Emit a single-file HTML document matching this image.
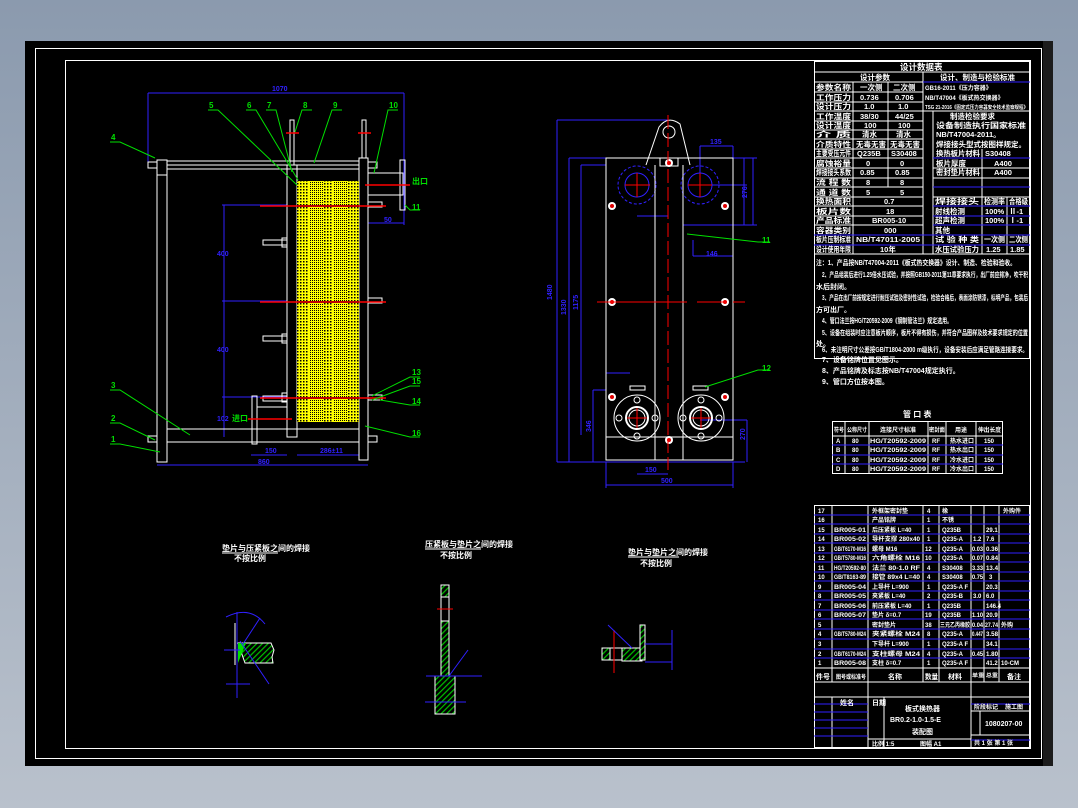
<!DOCTYPE html>
<html><head><meta charset="utf-8"><style>
html,body{margin:0;padding:0;width:1078px;height:808px;overflow:hidden;background:linear-gradient(#8b9aae,#b9c1cc);}
svg{position:absolute;left:0;top:0}
text{font-family:"Liberation Sans","Noto Sans CJK SC",sans-serif;font-weight:bold}
</style></head><body>
<svg width="1078" height="808" viewBox="0 0 1078 808" xmlns="http://www.w3.org/2000/svg">
<defs>
<pattern id="dots" width="3" height="3" patternUnits="userSpaceOnUse"><rect width="3" height="3" fill="#ffff00"/><rect x="0" y="0" width="1.5" height="1.5" fill="#000"/></pattern>
<pattern id="dots2" width="2" height="2" patternUnits="userSpaceOnUse"><rect width="2" height="2" fill="#ffff00"/><rect width="1" height="1" fill="#000"/></pattern>
<pattern id="hatch" width="4" height="4" patternUnits="userSpaceOnUse" patternTransform="rotate(45)"><rect width="4" height="4" fill="#000"/><rect width="1.2" height="4" fill="#00c000"/></pattern>
</defs>
<rect x="25" y="41" width="1028" height="725" fill="#000"/>
<rect x="1043" y="41" width="10" height="725" fill="#1c1c1c"/>
<rect x="35.5" y="48.5" width="1006" height="710" fill="none" stroke="#fff" stroke-width="1"/>
<rect x="65.5" y="60.5" width="965" height="688" fill="none" stroke="#fff" stroke-width="1"/>

<!-- LEFT VIEW -->
<g fill="none" stroke="#fff" stroke-width="1">
<line x1="148" y1="93" x2="404" y2="93" stroke="#3020ff"/>
<line x1="148" y1="93" x2="148" y2="165" stroke="#3020ff"/>
<line x1="404" y1="93" x2="404" y2="225" stroke="#3020ff"/>
<line x1="157" y1="465" x2="368" y2="465" stroke="#3020ff"/>
<line x1="224" y1="205" x2="224" y2="437" stroke="#3020ff"/>
<line x1="222" y1="205" x2="287" y2="205" stroke="#3020ff"/>
<line x1="222" y1="301" x2="287" y2="301" stroke="#3020ff"/>
<line x1="222" y1="397" x2="287" y2="397" stroke="#3020ff"/>
<line x1="251" y1="455" x2="287" y2="455" stroke="#3020ff"/>
<line x1="297" y1="455" x2="359" y2="455" stroke="#3020ff"/>
<line x1="368" y1="223" x2="404" y2="223" stroke="#3020ff"/>
<rect x="157" y="160" width="10" height="302"/>
<line x1="157" y1="175" x2="167" y2="175"/>
<rect x="167" y="161" width="192" height="4"/>
<rect x="167" y="165" width="192" height="4"/>
<rect x="359" y="158" width="9" height="302"/>
<rect x="287" y="165" width="10" height="272"/>
<rect x="290" y="120" width="4" height="45"/>
<rect x="362" y="120" width="4" height="38"/>
<rect x="167" y="429" width="192" height="13"/>
<rect x="148" y="162" width="9" height="6"/>
<rect x="148" y="436" width="9" height="6"/>
<rect x="368" y="162" width="9" height="6"/>
<rect x="368" y="436" width="9" height="6"/>
<rect x="263" y="240" width="24" height="5"/>
<rect x="263" y="336" width="24" height="5"/>
<rect x="263" y="396" width="24" height="5"/>
<rect x="282" y="238" width="5" height="9"/>
<rect x="282" y="334" width="5" height="9"/>
<rect x="282" y="393" width="5" height="9"/>
<rect x="368" y="202" width="14" height="5"/>
<rect x="368" y="298" width="14" height="5"/>
<rect x="368" y="395" width="14" height="5"/>
<rect x="368" y="173" width="35" height="22"/>
<rect x="400" y="160" width="5" height="50"/>
<rect x="252" y="396" width="5" height="48"/>
<rect x="257" y="407" width="30" height="22"/>
</g>
<rect x="297" y="181" width="62" height="241" fill="url(#dots)"/>
<rect x="309" y="181" width="14" height="241" fill="url(#dots2)"/>
<rect x="333" y="181" width="14" height="241" fill="url(#dots2)"/>
<g stroke="#000" stroke-width="2"><line x1="297" y1="206" x2="359" y2="206"/><line x1="297" y1="302" x2="359" y2="302"/><line x1="297" y1="398" x2="359" y2="398"/></g>
<g stroke="#ff0000" stroke-width="1.5"><line x1="260" y1="206" x2="386" y2="206"/><line x1="260" y1="302" x2="386" y2="302"/><line x1="260" y1="398" x2="386" y2="398"/><line x1="365" y1="185" x2="410" y2="185"/><line x1="248" y1="419" x2="292" y2="419"/><line x1="286" y1="133" x2="299" y2="133"/><line x1="358" y1="133" x2="371" y2="133"/></g>
<g stroke="#00e000" stroke-width="1" fill="none">
<polyline points="110,142 120,142 155,158"/><polyline points="208,110 218,110 297,185"/><polyline points="246,110 256,110 298,180"/><polyline points="266,110 276,110 292,172"/>
<polyline points="312,110 302,110 295,132"/><polyline points="342,110 332,110 314,163"/><polyline points="398,110 388,110 374,173"/><polyline points="110,390 120,390 190,435"/><polyline points="110,423 120,423 155,440"/><polyline points="110,444 120,444 160,452"/>
<polyline points="420,377 410,377 372,396"/><polyline points="420,386 410,386 372,400"/><polyline points="420,405 410,405 380,400"/><polyline points="420,437 410,437 365,426"/><polyline points="420,210 410,210 405,205"/>
</g>
<g fill="#00e000" font-size="8"><text x="111" y="140">4</text><text x="209" y="108">5</text><text x="247" y="108">6</text><text x="267" y="108">7</text><text x="303" y="108">8</text><text x="333" y="108">9</text><text x="389" y="108">10</text><text x="111" y="388">3</text><text x="111" y="421">2</text><text x="111" y="442">1</text><text x="412" y="375">13</text><text x="412" y="384">15</text><text x="412" y="404">14</text><text x="412" y="436">16</text><text x="412" y="210">11</text><text x="412" y="184">出口</text><text x="232" y="421">进口</text></g>
<g fill="#3020ff" font-size="7"><text x="272" y="91">1070</text><text x="217" y="256">400</text><text x="217" y="352">400</text><text x="217" y="421">102</text><text x="265" y="453">150</text><text x="320" y="453">286±11</text><text x="258" y="464">860</text><text x="384" y="222">50</text></g>

<!-- RIGHT VIEW -->
<g fill="none" stroke="#3020ff" stroke-width="1">
<line x1="557" y1="120" x2="668" y2="120"/><line x1="557" y1="120" x2="557" y2="462"/>
<line x1="569" y1="158" x2="606" y2="158"/><line x1="569" y1="158" x2="569" y2="462"/>
<line x1="581" y1="165" x2="606" y2="165"/><line x1="581" y1="165" x2="581" y2="435"/>
<line x1="593" y1="390" x2="606" y2="390"/><line x1="593" y1="390" x2="593" y2="462"/>
<line x1="557" y1="462" x2="745" y2="462"/>
<line x1="606" y1="485" x2="733" y2="485"/><line x1="606" y1="462" x2="606" y2="488"/><line x1="733" y1="462" x2="733" y2="488"/>
<line x1="637" y1="474" x2="668" y2="474"/>
<line x1="700" y1="146" x2="733" y2="146"/><line x1="700" y1="146" x2="700" y2="185"/><line x1="733" y1="146" x2="733" y2="158"/>
<line x1="693" y1="158" x2="757" y2="158"/><line x1="744" y1="158" x2="744" y2="225"/><line x1="753" y1="158" x2="753" y2="225"/><line x1="683" y1="225" x2="757" y2="225"/>
<line x1="693" y1="185" x2="747" y2="185"/>
<line x1="693" y1="256" x2="733" y2="256"/><line x1="693" y1="256" x2="693" y2="240"/>
<line x1="606" y1="373" x2="630" y2="373"/>
<line x1="700" y1="420" x2="747" y2="420"/><line x1="747" y1="420" x2="747" y2="462"/>
<line x1="637" y1="216" x2="668" y2="216"/>
<circle cx="637" cy="185" r="19" stroke-dasharray="3 2"/><circle cx="700" cy="185" r="19" stroke-dasharray="3 2"/>
<circle cx="637" cy="185" r="12"/><circle cx="700" cy="185" r="12"/>
</g>
<g fill="none" stroke="#fff" stroke-width="1">
<rect x="606" y="158" width="127" height="302"/>
<line x1="655" y1="165" x2="655" y2="460"/><line x1="683" y1="165" x2="683" y2="460"/>
<line x1="606" y1="437" x2="733" y2="437"/>
<path d="M646 165 L659 127 Q668 115 680 124 L690 165"/>
<circle cx="669" cy="132" r="6"/>
<rect x="660" y="158" width="18" height="8"/>
<circle cx="637" cy="418" r="23"/><circle cx="637" cy="418" r="11" stroke-width="2"/><circle cx="637" cy="418" r="8"/>
<circle cx="701" cy="418" r="23"/><circle cx="701" cy="418" r="11" stroke-width="2"/><circle cx="701" cy="418" r="8"/>
<rect x="630" y="386" width="15" height="4"/><rect x="693" y="386" width="15" height="4"/>
<circle cx="637" cy="400" r="3"/><circle cx="637" cy="436" r="3"/><circle cx="619" cy="418" r="3"/><circle cx="655" cy="418" r="3"/>
<circle cx="701" cy="400" r="3"/><circle cx="701" cy="436" r="3"/><circle cx="683" cy="418" r="3"/><circle cx="719" cy="418" r="3"/>
</g>
<g fill="#fff"><circle cx="612" cy="206" r="4"/><circle cx="725" cy="206" r="4"/><circle cx="612" cy="302" r="4"/><circle cx="725" cy="302" r="4"/><circle cx="612" cy="397" r="4"/><circle cx="725" cy="397" r="4"/><circle cx="669" cy="163" r="4"/><circle cx="669" cy="440" r="4"/></g>
<g fill="#e00000"><circle cx="612" cy="206" r="2"/><circle cx="725" cy="206" r="2"/><circle cx="612" cy="302" r="2"/><circle cx="725" cy="302" r="2"/><circle cx="612" cy="397" r="2"/><circle cx="725" cy="397" r="2"/><circle cx="669" cy="163" r="2"/><circle cx="669" cy="440" r="2"/></g>
<g stroke="#ff0000" stroke-width="1"><line x1="668" y1="115" x2="668" y2="470" stroke-dasharray="14 4"/><line x1="597" y1="302" x2="745" y2="302" stroke-dasharray="90 10 30 6"/>
<line x1="625" y1="185" x2="650" y2="185"/><line x1="688" y1="185" x2="712" y2="185"/><line x1="637" y1="173" x2="637" y2="197"/><line x1="700" y1="173" x2="700" y2="197"/>
<line x1="627" y1="418" x2="647" y2="418"/><line x1="691" y1="418" x2="711" y2="418"/><line x1="637" y1="408" x2="637" y2="428"/><line x1="701" y1="408" x2="701" y2="428"/></g>
<g stroke="#00e000" fill="none"><polyline points="687,234 758,242 770,242"/><polyline points="705,387 758,370 770,370"/></g>
<g fill="#00e000" font-size="8"><text x="762" y="243">11</text><text x="762" y="371">12</text></g>
<g fill="#3020ff" font-size="7"><text x="552" y="300" transform="rotate(-90 552 300)">1480</text><text x="566" y="315" transform="rotate(-90 566 315)">1330</text><text x="578" y="310" transform="rotate(-90 578 310)">1175</text><text x="591" y="432" transform="rotate(-90 591 432)">346</text><text x="710" y="144">135</text><text x="661" y="483">500</text><text x="645" y="472">150</text><text x="745" y="440" transform="rotate(-90 745 440)">270</text><text x="747" y="198" transform="rotate(-90 747 198)">276</text><text x="706" y="256">146</text></g>

<!-- DETAIL VIEWS -->
<g fill="#fff" font-size="8"><text x="222" y="551">垫片与压紧板之间的焊接</text><text x="234" y="561">不按比例</text><text x="425" y="547">压紧板与垫片之间的焊接</text><text x="440" y="558">不按比例</text><text x="628" y="555">垫片与垫片之间的焊接</text><text x="640" y="566">不按比例</text></g>
<g stroke="#fff" fill="none"><line x1="222" y1="553" x2="278" y2="553"/><line x1="425" y1="549" x2="481" y2="549"/><line x1="628" y1="557" x2="679" y2="557"/></g>
<path d="M238 643 L271 643 L274 650 L272 657 L273 663 L245 663 Z" fill="url(#hatch)" stroke="#fff"/>
<polygon points="238,643 246,643 238,663" fill="#00e000"/>
<line x1="235" y1="623" x2="235" y2="665" stroke="#fff"/>
<g stroke="#3020ff" fill="none"><line x1="237" y1="612" x2="237" y2="698"/><line x1="226" y1="684" x2="250" y2="684"/><path d="M226 617 Q250 605 265 624"/><line x1="240" y1="641" x2="269" y2="684"/><line x1="243" y1="644" x2="260" y2="618"/><line x1="224" y1="650" x2="240" y2="650"/></g>
<rect x="441" y="585" width="8" height="95" fill="url(#hatch)" stroke="#fff"/>
<rect x="441" y="597" width="8" height="24" fill="#000" stroke="#fff"/>
<rect x="435" y="676" width="20" height="38" fill="url(#hatch)" stroke="#fff"/>
<line x1="437" y1="609" x2="453" y2="609" stroke="#f00"/>
<g stroke="#3020ff" fill="none"><line x1="426" y1="676" x2="482" y2="676"/><line x1="449" y1="676" x2="468" y2="650"/><line x1="425" y1="702" x2="466" y2="702"/></g>
<rect x="602" y="648" width="8" height="12" fill="url(#hatch)" stroke="#fff"/>
<rect x="610" y="648" width="20" height="12" fill="none" stroke="#fff"/>
<rect x="622" y="648" width="20" height="13" fill="url(#hatch)" stroke="#fff"/>
<rect x="640" y="625" width="5" height="35" fill="url(#hatch)" stroke="#fff"/>
<line x1="614" y1="630" x2="614" y2="673" stroke="#f00"/>
<g stroke="#3020ff" fill="none"><line x1="608" y1="625" x2="632" y2="648"/><line x1="645" y1="644" x2="672" y2="644"/><line x1="645" y1="662" x2="672" y2="662"/><line x1="672" y1="630" x2="672" y2="670"/></g>

<!-- DESIGN DATA TABLE -->
<g stroke="#fff" fill="none" stroke-width="1">
<rect x="814.5" y="61.5" width="215" height="297"/>
<line x1="814" y1="72" x2="1030" y2="72"/>
<line x1="923" y1="72" x2="923" y2="254"/>
<line x1="853" y1="82" x2="853" y2="187"/><line x1="888" y1="82" x2="888" y2="187"/><line x1="853" y1="187" x2="853" y2="254"/>
<line x1="933" y1="111" x2="933" y2="254"/>
<line x1="982" y1="149" x2="982" y2="254"/><line x1="1007" y1="197" x2="1007" y2="254"/>
<line x1="814" y1="82" x2="1030" y2="82"/>
<line x1="814" y1="254" x2="1030" y2="254"/>
</g>
<g stroke="#fff">
<line x1="814" y1="92" x2="923" y2="92"/><line x1="814" y1="102" x2="923" y2="102"/><line x1="814" y1="111" x2="1030" y2="111"/><line x1="814" y1="121" x2="923" y2="121"/><line x1="814" y1="130" x2="923" y2="130"/><line x1="814" y1="139" x2="923" y2="139"/><line x1="814" y1="149" x2="923" y2="149"/><line x1="814" y1="158" x2="923" y2="158"/><line x1="814" y1="168" x2="923" y2="168"/><line x1="814" y1="178" x2="923" y2="178"/><line x1="814" y1="187" x2="923" y2="187"/><line x1="814" y1="197" x2="923" y2="197"/><line x1="814" y1="206" x2="923" y2="206"/><line x1="814" y1="216" x2="923" y2="216"/><line x1="814" y1="225" x2="923" y2="225"/><line x1="814" y1="235" x2="923" y2="235"/><line x1="814" y1="245" x2="923" y2="245"/>
<line x1="933" y1="158" x2="1030" y2="158"/><line x1="933" y1="168" x2="1030" y2="168"/><line x1="933" y1="178" x2="1030" y2="178"/><line x1="933" y1="187" x2="1030" y2="187"/><line x1="933" y1="197" x2="1030" y2="197"/><line x1="933" y1="235" x2="1030" y2="235"/><line x1="933" y1="245" x2="1030" y2="245"/>
</g>
<g stroke="#3020ff"><line x1="923" y1="82" x2="1030" y2="82"/><line x1="933" y1="158" x2="1030" y2="158"/><line x1="933" y1="187" x2="1030" y2="187"/><line x1="933" y1="206" x2="1030" y2="206"/><line x1="933" y1="216" x2="1030" y2="216"/><line x1="814" y1="235" x2="1030" y2="235"/><line x1="814" y1="245" x2="1030" y2="245"/><line x1="933" y1="225" x2="1030" y2="225"/></g>
<g fill="#fff" font-size="7.5">
<text x="900" y="70" font-size="8.5">设计数据表</text>
<text x="860" y="80">设计参数</text><text x="940" y="80">设计、制造与检验标准</text>
<text x="816" y="90" textLength="35" lengthAdjust="spacingAndGlyphs">参数名称</text><text x="860" y="90">一次侧</text><text x="893" y="90">二次侧</text><text x="925" y="90" font-size="6">GB16-2011《压力容器》</text>
<text x="816" y="100" textLength="35" lengthAdjust="spacingAndGlyphs">工作压力</text><text x="860" y="100">0.736</text><text x="895" y="100">0.706</text><text x="925" y="100" font-size="6">NB/T47004《板式热交换器》</text>
<text x="816" y="109" textLength="35" lengthAdjust="spacingAndGlyphs">设计压力</text><text x="864" y="109">1.0</text><text x="898" y="109">1.0</text><text x="925" y="109" font-size="5" textLength="103" lengthAdjust="spacingAndGlyphs">TSG 21-2016《固定式压力容器安全技术监察规程》</text>
<text x="816" y="119" textLength="35" lengthAdjust="spacingAndGlyphs">工作温度</text><text x="860" y="119">38/30</text><text x="895" y="119">44/25</text><text x="950" y="119">制造检验要求</text>
<text x="816" y="128" textLength="35" lengthAdjust="spacingAndGlyphs">设计温度</text><text x="864" y="128">100</text><text x="898" y="128">100</text><text x="936" y="128" textLength="90" lengthAdjust="spacingAndGlyphs">设备制造执行国家标准</text>
<text x="816" y="137" textLength="35" lengthAdjust="spacingAndGlyphs">介  质</text><text x="862" y="137">清水</text><text x="896" y="137">清水</text><text x="936" y="137">NB/T47004-2011。</text>
<text x="816" y="147" textLength="35" lengthAdjust="spacingAndGlyphs">介质特性</text><text x="856" y="147" textLength="30" lengthAdjust="spacingAndGlyphs">无毒无害</text><text x="890" y="147" textLength="30" lengthAdjust="spacingAndGlyphs">无毒无害</text><text x="936" y="147" textLength="90" lengthAdjust="spacingAndGlyphs">焊接接头型式按图样规定。</text>
<text x="816" y="156" textLength="35" lengthAdjust="spacingAndGlyphs">主要受压元件</text><text x="857" y="156">Q235B</text><text x="891" y="156">S30408</text><text x="936" y="156" textLength="44" lengthAdjust="spacingAndGlyphs">换热板片材料</text><text x="985" y="156">S30408</text>
<text x="816" y="166" textLength="35" lengthAdjust="spacingAndGlyphs">腐蚀裕量</text><text x="866" y="166">0</text><text x="900" y="166">0</text><text x="936" y="166">板片厚度</text><text x="994" y="166">A400</text>
<text x="816" y="175" textLength="35" lengthAdjust="spacingAndGlyphs">焊接接头系数</text><text x="860" y="175">0.85</text><text x="895" y="175">0.85</text><text x="936" y="175" textLength="44" lengthAdjust="spacingAndGlyphs">密封垫片材料</text><text x="994" y="175">A400</text>
<text x="816" y="185" textLength="35" lengthAdjust="spacingAndGlyphs">流 程 数</text><text x="866" y="185">8</text><text x="900" y="185">8</text>
<text x="816" y="195" textLength="35" lengthAdjust="spacingAndGlyphs">通 道 数</text><text x="866" y="195">5</text><text x="900" y="195">5</text>
<text x="816" y="204" textLength="35" lengthAdjust="spacingAndGlyphs">换热面积</text><text x="884" y="204">0.7</text><text x="935" y="204" textLength="44" lengthAdjust="spacingAndGlyphs">焊接接头</text><text x="984" y="204" textLength="21" lengthAdjust="spacingAndGlyphs">检测率</text><text x="1009" y="204" textLength="19" lengthAdjust="spacingAndGlyphs">合格级</text>
<text x="816" y="214" textLength="35" lengthAdjust="spacingAndGlyphs">板片数</text><text x="886" y="214">18</text><text x="935" y="214">射线检测</text><text x="985" y="214">100%</text><text x="1009" y="214">Ⅱ-1</text>
<text x="816" y="223" textLength="35" lengthAdjust="spacingAndGlyphs">产品标准</text><text x="872" y="223">BR005-10</text><text x="935" y="223">超声检测</text><text x="985" y="223">100%</text><text x="1009" y="223">Ⅰ-1</text>
<text x="816" y="233" textLength="35" lengthAdjust="spacingAndGlyphs">容器类别</text><text x="884" y="233">000</text><text x="935" y="233">其他</text>
<text x="816" y="242" textLength="35" lengthAdjust="spacingAndGlyphs">板片压制标准</text><text x="856" y="242" textLength="64" lengthAdjust="spacingAndGlyphs">NB/T47011-2005</text><text x="935" y="242" textLength="44" lengthAdjust="spacingAndGlyphs">试 验 种 类</text><text x="984" y="242" textLength="21" lengthAdjust="spacingAndGlyphs">一次侧</text><text x="1009" y="242" textLength="19" lengthAdjust="spacingAndGlyphs">二次侧</text>
<text x="816" y="252" textLength="35" lengthAdjust="spacingAndGlyphs">设计使用年限</text><text x="880" y="252">10年</text><text x="935" y="252" textLength="44" lengthAdjust="spacingAndGlyphs">水压试验压力</text><text x="986" y="252">1.25</text><text x="1010" y="252">1.85</text>
</g>
<g fill="#fff" font-size="7" lengthAdjust="spacingAndGlyphs">
<text x="816" y="265" textLength="200" lengthAdjust="spacingAndGlyphs">注：1、产品按NB/T47004-2011《板式热交换器》设计、制造、检验和验收。</text>
<text x="822" y="277" textLength="206" lengthAdjust="spacingAndGlyphs">2、产品组装后进行1.25倍水压试验，并按照GB150-2011第11章要求执行，出厂前应排净，吹干积</text>
<text x="816" y="289">水后封闭。</text>
<text x="822" y="300" textLength="206" lengthAdjust="spacingAndGlyphs">3、产品在出厂前按规定进行耐压试验及密封性试验，检验合格后，表面涂防锈漆，标明产品，包装后</text>
<text x="816" y="312">方可出厂。</text>
<text x="822" y="323" textLength="130" lengthAdjust="spacingAndGlyphs">4、管口法兰按HG/T20592-2009《钢制管法兰》规定选用。</text>
<text x="822" y="335" textLength="206" lengthAdjust="spacingAndGlyphs">5、设备在组装时应注意板片顺序，板片不得有损伤，并符合产品图样及技术要求规定的位置</text>
<text x="816" y="346">处。</text>
<text x="822" y="352" textLength="206" lengthAdjust="spacingAndGlyphs">6、未注明尺寸公差按GB/T1804-2000 m级执行，设备安装后应满足管路连接要求。</text>
<text x="822" y="362">7、设备铭牌位置见图示。</text>
<text x="822" y="373">8、产品铭牌及标志按NB/T47004规定执行。</text>
<text x="822" y="384">9、管口方位按本图。</text>
</g>

<!-- PIPE TABLE -->
<text x="903" y="417" fill="#fff" font-size="8">管 口 表</text>
<g stroke="#fff" fill="none"><rect x="832.5" y="421.5" width="170" height="52"/><line x1="845" y1="421" x2="845" y2="474"/><line x1="869" y1="421" x2="869" y2="474"/><line x1="928" y1="421" x2="928" y2="474"/><line x1="946" y1="421" x2="946" y2="474"/><line x1="976" y1="421" x2="976" y2="474"/><line x1="832" y1="436" x2="1003" y2="436"/></g>
<g stroke="#3020ff"><line x1="832" y1="445" x2="1003" y2="445"/><line x1="832" y1="455" x2="1003" y2="455"/><line x1="832" y1="464" x2="1003" y2="464"/></g>
<g fill="#fff" font-size="6"><text x="834" y="432" textLength="10" lengthAdjust="spacingAndGlyphs">符号</text><text x="847" y="432" textLength="20" lengthAdjust="spacingAndGlyphs">公称尺寸</text><text x="880" y="432">连接尺寸标准</text><text x="929" y="432" textLength="16" lengthAdjust="spacingAndGlyphs">密封面</text><text x="955" y="432">用途</text><text x="978" y="432" textLength="23" lengthAdjust="spacingAndGlyphs">伸出长度</text>
<text x="836" y="443">A</text><text x="852" y="443">80</text><text x="870" y="443" textLength="56" lengthAdjust="spacingAndGlyphs">HG/T20592-2009</text><text x="932" y="443">RF</text><text x="950" y="443">热水进口</text><text x="984" y="443">150</text>
<text x="836" y="452">B</text><text x="852" y="452">80</text><text x="870" y="452" textLength="56" lengthAdjust="spacingAndGlyphs">HG/T20592-2009</text><text x="932" y="452">RF</text><text x="950" y="452">热水出口</text><text x="984" y="452">150</text>
<text x="836" y="462">C</text><text x="852" y="462">80</text><text x="870" y="462" textLength="56" lengthAdjust="spacingAndGlyphs">HG/T20592-2009</text><text x="932" y="462">RF</text><text x="950" y="462">冷水进口</text><text x="984" y="462">150</text>
<text x="836" y="471">D</text><text x="852" y="471">80</text><text x="870" y="471" textLength="56" lengthAdjust="spacingAndGlyphs">HG/T20592-2009</text><text x="932" y="471">RF</text><text x="950" y="471">冷水出口</text><text x="984" y="471">150</text></g>

<!-- PARTS LIST -->
<g stroke="#fff" fill="none"><rect x="814.5" y="505.5" width="215" height="242"/>
<line x1="832" y1="505" x2="832" y2="682"/><line x1="868" y1="505" x2="868" y2="748"/><line x1="923" y1="505" x2="923" y2="682"/><line x1="939" y1="505" x2="939" y2="682"/><line x1="971" y1="505" x2="971" y2="748"/><line x1="984" y1="505" x2="984" y2="682"/><line x1="999" y1="505" x2="999" y2="682"/>
<line x1="814" y1="668" x2="1030" y2="668"/><line x1="814" y1="682" x2="1030" y2="682"/><line x1="814" y1="697" x2="1030" y2="697"/><line x1="884" y1="697" x2="884" y2="748"/><line x1="832" y1="697" x2="832" y2="748"/><line x1="971" y1="711" x2="1030" y2="711"/><line x1="971" y1="735" x2="1030" y2="735"/><line x1="868" y1="739" x2="971" y2="739"/><line x1="980" y1="711" x2="980" y2="735"/></g>
<g stroke="#3020ff"><line x1="814" y1="515" x2="1030" y2="515"/><line x1="814" y1="524" x2="1030" y2="524"/><line x1="814" y1="534" x2="1030" y2="534"/><line x1="814" y1="543" x2="1030" y2="543"/><line x1="814" y1="553" x2="1030" y2="553"/><line x1="814" y1="562" x2="1030" y2="562"/><line x1="814" y1="572" x2="1030" y2="572"/><line x1="814" y1="581" x2="1030" y2="581"/><line x1="814" y1="591" x2="1030" y2="591"/><line x1="814" y1="600" x2="1030" y2="600"/><line x1="814" y1="610" x2="1030" y2="610"/><line x1="814" y1="619" x2="1030" y2="619"/><line x1="814" y1="629" x2="1030" y2="629"/><line x1="814" y1="639" x2="1030" y2="639"/><line x1="814" y1="649" x2="1030" y2="649"/><line x1="814" y1="658" x2="1030" y2="658"/>
<line x1="814" y1="704" x2="868" y2="704"/><line x1="814" y1="712" x2="868" y2="712"/><line x1="814" y1="720" x2="868" y2="720"/><line x1="814" y1="728" x2="868" y2="728"/><line x1="814" y1="736" x2="868" y2="736"/><line x1="971" y1="704" x2="1030" y2="704"/><line x1="971" y1="740" x2="1030" y2="740"/></g>
<g fill="#fff" font-size="6">
<text x="818" y="513">17</text><text x="872" y="513">外框架密封垫</text><text x="927" y="513">4</text><text x="942" y="513">橡</text><text x="1003" y="513">外购件</text>
<text x="818" y="522">16</text><text x="872" y="522">产品铭牌</text><text x="927" y="522">1</text><text x="942" y="522">不锈</text>
<text x="818" y="532">15</text><text x="834" y="532" textLength="32" lengthAdjust="spacingAndGlyphs">BR005-01</text><text x="872" y="532">后压紧板 L=40</text><text x="927" y="532">1</text><text x="942" y="532">Q235B</text><text x="986" y="532">29.1</text>
<text x="818" y="541">14</text><text x="834" y="541" textLength="32" lengthAdjust="spacingAndGlyphs">BR005-02</text><text x="872" y="541" textLength="48" lengthAdjust="spacingAndGlyphs">导杆支撑 280x40</text><text x="927" y="541">1</text><text x="942" y="541">Q235-A</text><text x="973" y="541">1.2</text><text x="986" y="541">7.6</text>
<text x="818" y="551">13</text><text x="834" y="551" textLength="32" lengthAdjust="spacingAndGlyphs">GB/T6170-M16</text><text x="872" y="551">螺母 M16</text><text x="925" y="551">12</text><text x="942" y="551">Q235-A</text><text x="972" y="551" textLength="11" lengthAdjust="spacingAndGlyphs">0.03</text><text x="986" y="551" textLength="12" lengthAdjust="spacingAndGlyphs">0.36</text>
<text x="818" y="560">12</text><text x="834" y="560" textLength="32" lengthAdjust="spacingAndGlyphs">GB/T5780-M16</text><text x="872" y="560" textLength="48" lengthAdjust="spacingAndGlyphs">六角螺栓 M16</text><text x="925" y="560">10</text><text x="942" y="560">Q235-A</text><text x="972" y="560" textLength="11" lengthAdjust="spacingAndGlyphs">0.07</text><text x="986" y="560" textLength="12" lengthAdjust="spacingAndGlyphs">0.84</text>
<text x="818" y="570">11</text><text x="834" y="570" textLength="32" lengthAdjust="spacingAndGlyphs">HG/T20592-80</text><text x="872" y="570" textLength="48" lengthAdjust="spacingAndGlyphs">法兰 80-1.0 RF</text><text x="927" y="570">4</text><text x="942" y="570">S30408</text><text x="972" y="570" textLength="11" lengthAdjust="spacingAndGlyphs">3.33</text><text x="986" y="570" textLength="12" lengthAdjust="spacingAndGlyphs">13.4</text>
<text x="818" y="579">10</text><text x="834" y="579" textLength="32" lengthAdjust="spacingAndGlyphs">GB/T8163-89</text><text x="872" y="579" textLength="48" lengthAdjust="spacingAndGlyphs">接管 89x4 L=40</text><text x="927" y="579">4</text><text x="942" y="579">S30408</text><text x="972" y="579" textLength="11" lengthAdjust="spacingAndGlyphs">0.75</text><text x="989" y="579">3</text>
<text x="818" y="589">9</text><text x="834" y="589" textLength="32" lengthAdjust="spacingAndGlyphs">BR005-04</text><text x="872" y="589">上导杆 L=900</text><text x="927" y="589">1</text><text x="942" y="589">Q235-A F</text><text x="986" y="589">20.3</text>
<text x="818" y="598">8</text><text x="834" y="598" textLength="32" lengthAdjust="spacingAndGlyphs">BR005-05</text><text x="872" y="598">夹紧板 L=40</text><text x="927" y="598">2</text><text x="942" y="598">Q235-B</text><text x="973" y="598">3.0</text><text x="986" y="598">6.0</text>
<text x="818" y="608">7</text><text x="834" y="608" textLength="32" lengthAdjust="spacingAndGlyphs">BR005-06</text><text x="872" y="608">前压紧板 L=40</text><text x="927" y="608">1</text><text x="942" y="608">Q235B</text><text x="986" y="608">146.4</text>
<text x="818" y="617">6</text><text x="834" y="617" textLength="32" lengthAdjust="spacingAndGlyphs">BR005-07</text><text x="872" y="617">垫片 δ=0.7</text><text x="925" y="617">19</text><text x="942" y="617">Q235B</text><text x="972" y="617" textLength="11" lengthAdjust="spacingAndGlyphs">1.10</text><text x="986" y="617">20.9</text>
<text x="818" y="627">5</text><text x="872" y="627">密封垫片</text><text x="925" y="627">38</text><text x="940" y="627" textLength="30" lengthAdjust="spacingAndGlyphs">三元乙丙橡胶</text><text x="972" y="627" textLength="11" lengthAdjust="spacingAndGlyphs">0.04</text><text x="985" y="627" textLength="13" lengthAdjust="spacingAndGlyphs">27.74</text><text x="1001" y="627">外购</text>
<text x="818" y="636">4</text><text x="834" y="636" textLength="32" lengthAdjust="spacingAndGlyphs">GB/T5780-M24</text><text x="872" y="636" textLength="48" lengthAdjust="spacingAndGlyphs">夹紧螺栓 M24</text><text x="927" y="636">8</text><text x="942" y="636">Q235-A</text><text x="972" y="636" textLength="11" lengthAdjust="spacingAndGlyphs">0.447</text><text x="986" y="636" textLength="12" lengthAdjust="spacingAndGlyphs">3.58</text>
<text x="818" y="646">3</text><text x="872" y="646">下导杆 L=900</text><text x="927" y="646">1</text><text x="942" y="646">Q235-A F</text><text x="986" y="646">34.1</text>
<text x="818" y="656">2</text><text x="834" y="656" textLength="32" lengthAdjust="spacingAndGlyphs">GB/T6170-M24</text><text x="872" y="656" textLength="48" lengthAdjust="spacingAndGlyphs">支柱螺母 M24</text><text x="927" y="656">4</text><text x="942" y="656">Q235-A</text><text x="972" y="656" textLength="11" lengthAdjust="spacingAndGlyphs">0.45</text><text x="986" y="656" textLength="12" lengthAdjust="spacingAndGlyphs">1.80</text>
<text x="818" y="665">1</text><text x="834" y="665" textLength="32" lengthAdjust="spacingAndGlyphs">BR005-08</text><text x="872" y="665">支柱 δ=0.7</text><text x="927" y="665">1</text><text x="942" y="665">Q235-A F</text><text x="986" y="665">41.2</text><text x="1001" y="665">10-CM</text>
<text x="816" y="679" font-size="7">件号</text><text x="836" y="679" font-size="6" textLength="30" lengthAdjust="spacingAndGlyphs">图号或标准号</text><text x="888" y="679" font-size="7">名称</text><text x="925" y="679" font-size="7" textLength="13" lengthAdjust="spacingAndGlyphs">数量</text><text x="948" y="679" font-size="7">材料</text><text x="972" y="677" font-size="5" textLength="26" lengthAdjust="spacingAndGlyphs">单重 总重</text><text x="1007" y="679" font-size="7">备注</text>
<text x="840" y="705" font-size="7">姓名</text><text x="872" y="705" font-size="7">日期</text>
<text x="905" y="711" font-size="7">板式换热器</text><text x="890" y="722" font-size="7">BR0.2-1.0-1.5-E</text><text x="912" y="734" font-size="7">装配图</text>
<text x="974" y="709">阶段标记</text><text x="1005" y="709">施工图</text><text x="985" y="726" font-size="7">1080207-00</text><text x="974" y="745">共 1 张 第 1 张</text>
<text x="872" y="746">比例 1:5</text><text x="920" y="746">图幅 A1</text>
</g>
</svg>
</body></html>
